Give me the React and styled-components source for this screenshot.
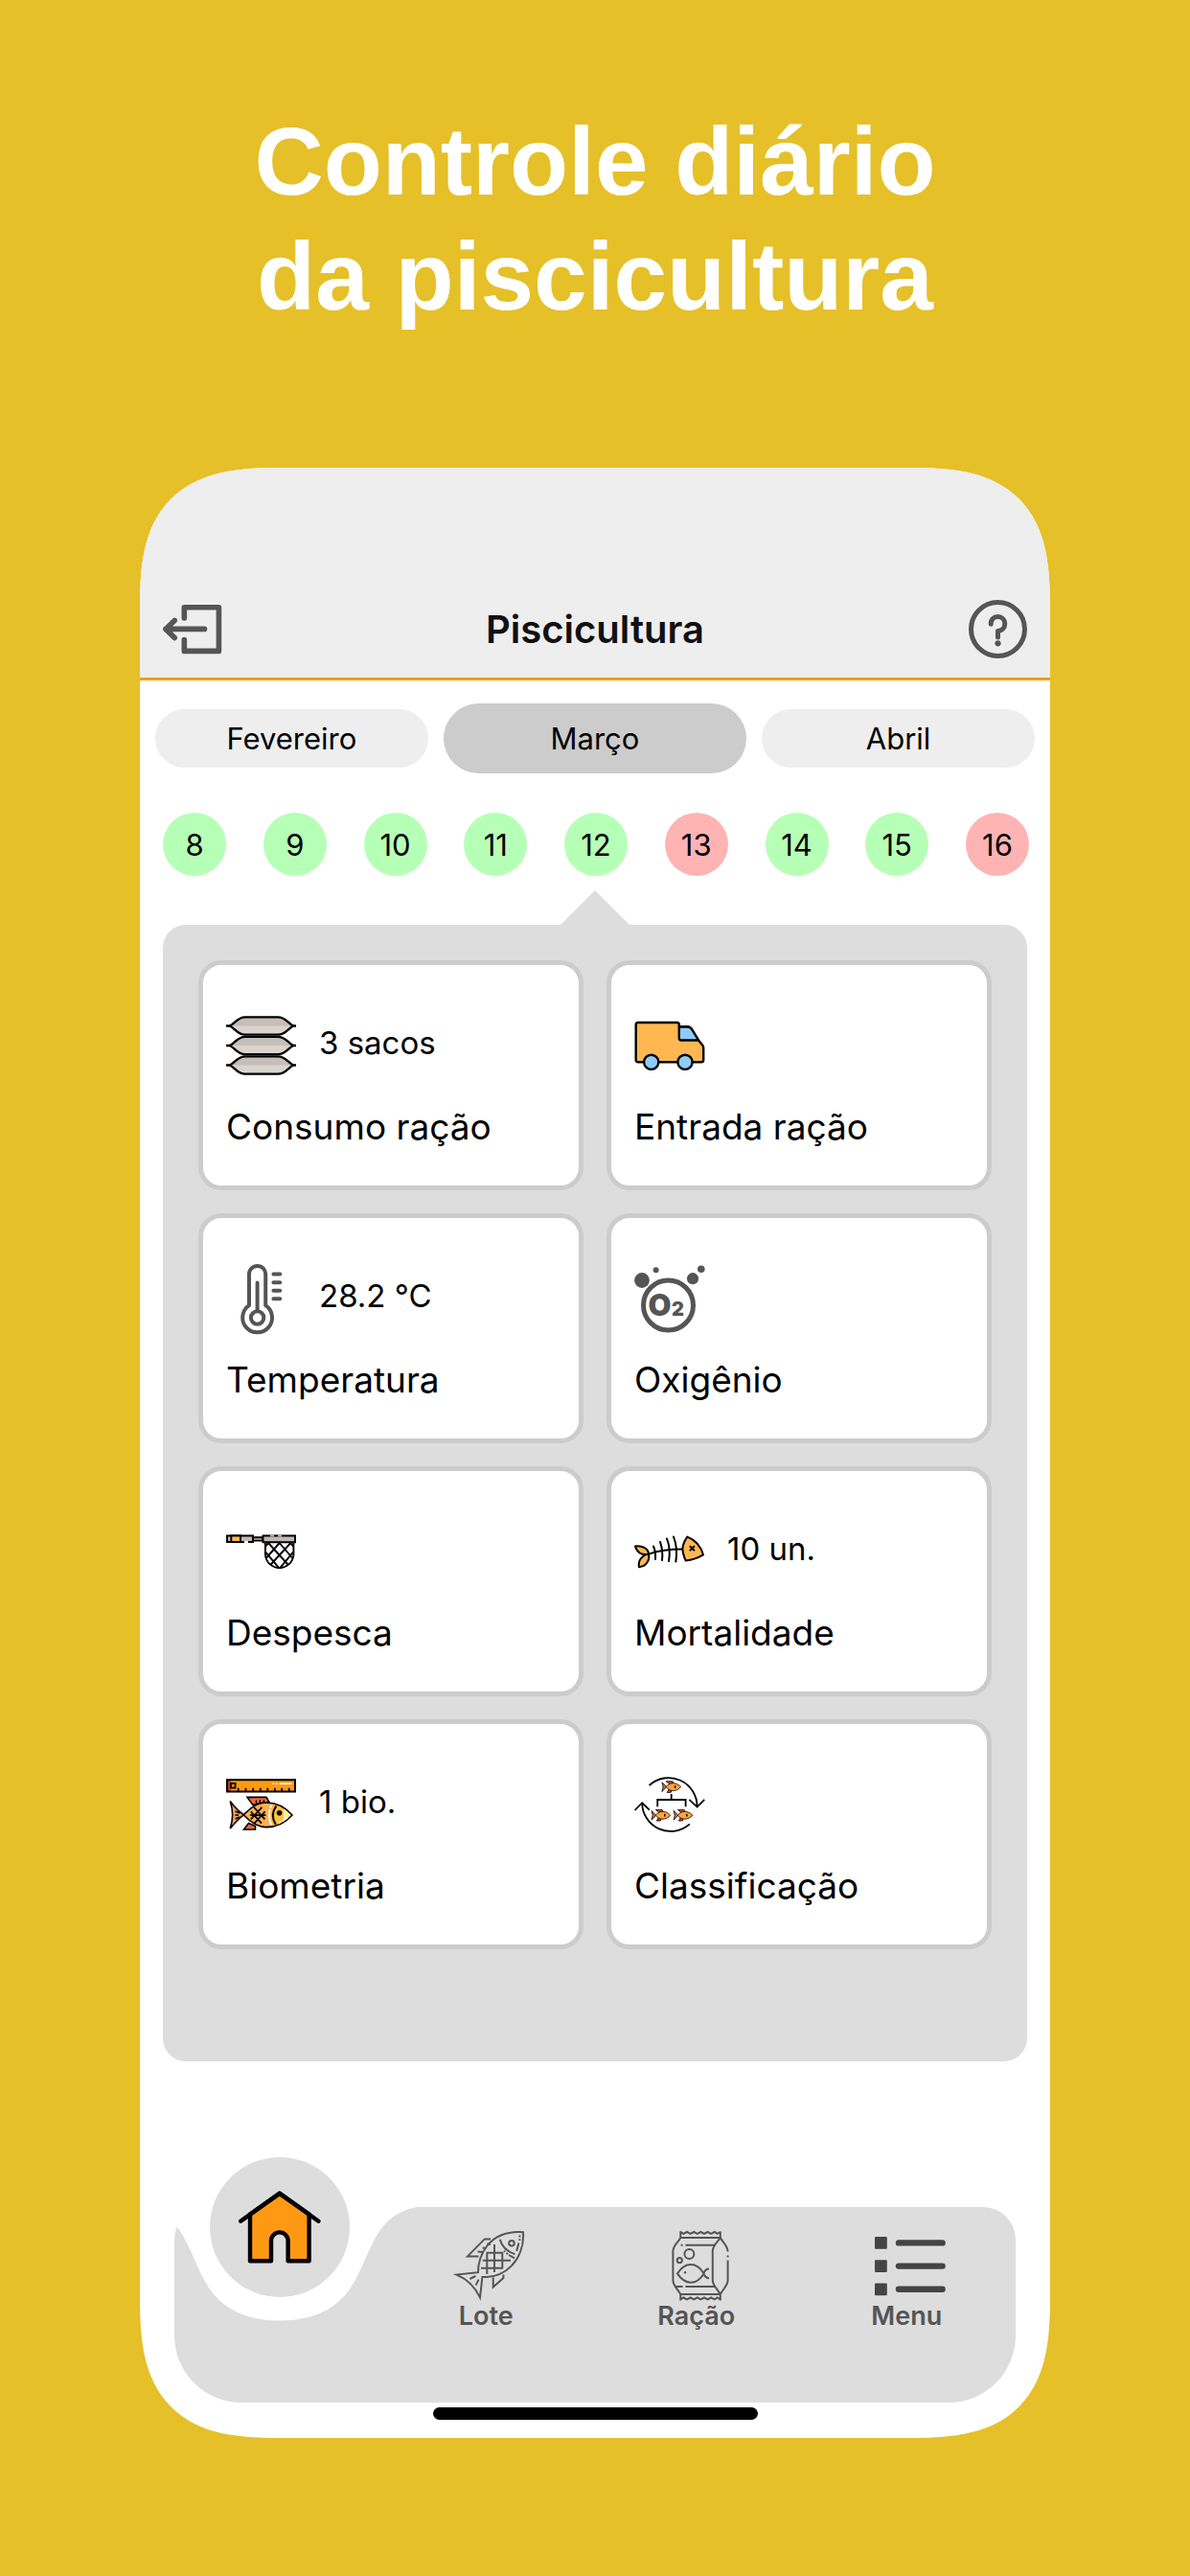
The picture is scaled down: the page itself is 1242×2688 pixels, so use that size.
import React, { useState } from "react";
import styled, { createGlobalStyle, css } from "styled-components";

const color = {
  page: "#e6c028",
  header: "#eeeeee",
  panel: "#dddddd",
  line: "#cccccc",
  ink: "#000000",
  icon: "#555555",
  accent: "#ff9914",
  ok: "#b6ffb6",
  missing: "#ffb3b3",
};

const GlobalStyle = createGlobalStyle`
  *, *::before, *::after { box-sizing: border-box; }
  body {
    margin: 0;
    background: ${color.page};
    color: ${color.ink};
    font-family: Inter, "Liberation Sans", sans-serif;
  }
  svg { display: block; overflow: visible; flex: none; }
`;

const Page = styled.div`
  display: flex;
  flex-direction: column;
  gap: 140px;
  padding: 108px 146px 144px;
`;

const Headline = styled.h1`
  margin: 0;
  color: #fff;
  text-align: center;
  font: 700 100px/120px "Liberation Sans", Arial, sans-serif;
`;

const Phone = styled.main`
  display: flex;
  flex-direction: column;
  overflow: hidden;
  background: #fff;
  border-radius: 120px;
  @supports (corner-shape: superellipse(1.5)) {
    border-radius: 150px;
    corner-shape: superellipse(1.5);
  }
`;

const plainButton = css`
  margin: 0;
  padding: 0;
  border: 0;
  background: none;
  color: inherit;
  font: inherit;
  cursor: pointer;
`;

const Header = styled.header`
  display: flex;
  align-items: center;
  justify-content: space-between;
  padding: 138px 24px 20px;
  background: ${color.header};
  border-bottom: 3px solid ${color.accent};
`;

const IconButton = styled.button`
  ${plainButton}
  color: ${color.icon};
`;

const Title = styled.h2`
  margin: 0;
  font-size: 40px;
  line-height: 48px;
  font-weight: 600;
  color: #111;
`;

const Months = styled.nav`
  display: flex;
  align-items: center;
  gap: 16px;
  padding: 24px 16px 0;
`;

const Month = styled.button`
  ${plainButton}
  flex: ${(p) => (p.$active ? 10 : 9)} 1 0;
  height: ${(p) => (p.$active ? 73 : 61)}px;
  border-radius: 37px;
  background: ${(p) => (p.$active ? color.line : color.header)};
  font-size: 31px;
`;

const Days = styled.div`
  display: flex;
  justify-content: space-between;
  padding: 41px 22px 15px 24px;
`;

const Day = styled.button`
  ${plainButton}
  width: 66px;
  height: 66px;
  border-radius: 50%;
  background: ${(p) => (p.$missing ? color.missing : color.ok)};
  font-size: 31px;
`;

const Pointer = styled.div`
  align-self: center;
  width: 72px;
  height: 36px;
  background: ${color.panel};
  clip-path: polygon(50% 0, 100% 100%, 0 100%);
`;

const Panel = styled.section`
  display: grid;
  grid-template-columns: 1fr 1fr;
  gap: 24px;
  margin: 0 24px;
  padding: 37px 37px 117px;
  background: ${color.panel};
  border-radius: 24px;
`;

const CardBox = styled.button`
  ${plainButton}
  display: flex;
  flex-direction: column;
  align-items: flex-start;
  gap: 24px;
  padding: 48px 24px 37px;
  background: #fff;
  border: 5px solid ${color.line};
  border-radius: 24px;
  text-align: left;
`;

const CardTop = styled.span`
  display: flex;
  gap: 24px;
`;

const CardValue = styled.span`
  font-size: 33px;
  line-height: 66px;
`;

const CardLabel = styled.span`
  font-size: 37px;
  line-height: 48px;
`;

const BottomArea = styled.footer`
  display: flex;
  flex-direction: column;
  align-items: center;
  gap: 5px;
  padding: 152px 36px 19px;
`;

const TabBar = styled.nav`
  position: relative;
  display: grid;
  grid-template-columns: repeat(4, 1fr);
  align-self: stretch;
  height: 204px;
  background: ${color.panel};
  border-radius: 34px 34px 70px 70px;
`;

const Notch = styled.svg`
  position: absolute;
  left: calc(12.5% - 143px);
  top: -1px;
`;

const HomeLink = styled.a`
  position: absolute;
  left: calc(12.5% - 73px);
  top: -52px;
  display: grid;
  place-items: center;
  width: 146px;
  height: 146px;
  border-radius: 50%;
  background: ${color.panel};
`;

const Tab = styled.a`
  grid-column: ${(p) => p.$column};
  display: flex;
  flex-direction: column;
  align-items: center;
  gap: 2px;
  padding-top: 25px;
  color: ${color.icon};
  text-decoration: none;
`;

const TabLabel = styled.span`
  padding-right: 8px;
  font-size: 27px;
  line-height: 30px;
  font-weight: 600;
`;

const HomeIndicator = styled.div`
  width: 339px;
  height: 13px;
  border-radius: 7px;
  background: #000;
`;

const CardSvg = ({ children }) => (
  <svg width="73" height="73" viewBox="0 0 73 73" fill="none" aria-hidden="true">
    {children}
  </svg>
);

const ExitIcon = () => (
  <svg width="61" height="51" viewBox="0 0 61 51" fill="none" stroke="currentColor" strokeWidth="5.6" strokeLinecap="round" strokeLinejoin="round" aria-hidden="true">
    <path d="M22.3 14V2.8H58.4V48.4H22.3V36.5" />
    <path d="M3 25.4H43.5M12.2 16.4L3 25.4L12.2 34.6" />
  </svg>
);

const HelpIcon = () => (
  <svg width="61" height="61" viewBox="0 0 61 61" fill="none" stroke="currentColor" strokeWidth="5" strokeLinecap="round" strokeLinejoin="round" aria-hidden="true">
    <circle cx="30.5" cy="30.5" r="28" />
    <path d="M23.2 25.2C23 20.6 26 17.6 30.4 17.6C34.8 17.6 37.8 20.8 37.8 24.8C37.8 29 35 32 30.5 32.6V39" />
    <circle cx="30.5" cy="45.3" r="3.1" fill="currentColor" stroke="none" />
  </svg>
);

const sackPath = (c) =>
  `M4 ${c}C9 ${c - 2.6} 12 ${c - 9.2} 20 ${c - 9.2}H54C62 ${c - 9.2} 65 ${c - 2.6} 70 ${c}C65 ${c + 2.6} 62 ${c + 9.2} 54 ${c + 9.2}H20C12 ${c + 9.2} 9 ${c + 2.6} 4 ${c}Z`;

const SacksIcon = () => (
  <CardSvg>
    {[15.5, 36, 56.5].map((c) => (
      <g key={c}>
        <path d={sackPath(c)} fill="#dbd4ce" />
        <path d={`M4 ${c}C9 ${c - 2.6} 12 ${c - 9.2} 20 ${c - 9.2}H54C62 ${c - 9.2} 65 ${c - 2.6} 70 ${c}Z`} fill="#c6beb8" />
        <path d={sackPath(c)} stroke="#000" strokeWidth="2.3" strokeLinejoin="round" />
        <path d={`M0 ${c}H5M69 ${c}H73`} stroke="#000" strokeWidth="2.4" />
      </g>
    ))}
  </CardSvg>
);

const TruckIcon = () => (
  <CardSvg>
    <g stroke="#000" strokeWidth="2.4" strokeLinejoin="round">
      <path d="M4 12H44.5Q46.8 12 46.8 14.3V16.5H55.5Q58.5 16.5 60.3 19.5L67 30.5L71 35.2Q72.2 36.6 72.2 38.5V51Q72.2 53.3 70 53.3H4Q1.7 53.3 1.7 51V14.3Q1.7 12 4 12Z" fill="#ffb751" />
      <path d="M46.8 16.5H55.5Q58.5 16.5 60.3 19.5L67 30.5H49Q46.8 30.5 46.8 28.3Z" fill="#8fcbfa" />
      <circle cx="17.7" cy="53.3" r="7.6" fill="#8fcbfa" />
      <circle cx="53" cy="53.3" r="7.6" fill="#8fcbfa" />
    </g>
  </CardSvg>
);

const ThermometerIcon = () => (
  <CardSvg>
    <g stroke={color.icon} strokeWidth="4" strokeLinecap="round">
      <path d="M24 43.2V10.5a8.6 8.6 0 0 1 17.2 0V43.2A15.4 15.4 0 1 1 24 43.2Z" strokeLinejoin="round" />
      <circle cx="32.6" cy="56" r="6.7" />
      <path d="M32.6 19.5V48M49.4 10.6H56.2M49.4 19.2H56.2M49.4 27.7H56.2M49.4 36.3H56.2" />
    </g>
  </CardSvg>
);

const OxygenIcon = () => (
  <CardSvg>
    <g fill={color.icon}>
      <circle cx="35.5" cy="43" r="26" fill="none" stroke={color.icon} strokeWidth="5" />
      <circle cx="8" cy="17" r="7.9" />
      <circle cx="22.6" cy="6.3" r="3" />
      <circle cx="61" cy="15.2" r="6.1" />
      <circle cx="69.8" cy="5.2" r="3.8" />
      <text x="14.5" y="53.5" fontFamily="Inter, sans-serif" fontWeight="900" fontSize="31">O</text>
      <text x="39" y="53.5" fontFamily="Inter, sans-serif" fontWeight="900" fontSize="20">2</text>
    </g>
  </CardSvg>
);

const NetIcon = () => (
  <CardSvg>
    <g stroke="#000" strokeWidth="1.9">
      <path d="M1 19.5H28V26H1Z" fill="#c0b8b3" />
      <path d="M5.3 19.5H15V26H5.3Z" fill="#ffb751" />
      <path d="M28 21.2H38V24.6H28Z" fill="#c0b8b3" />
      <path d="M38.5 19.5H72V26.2H38.5Z" fill="#c0b8b3" />
      <path d="M40.9 27V39.5A14.8 14.8 0 0 0 70.4 39.5V27" />
      <path d="M44 27L64.5 49.5M55.6 27L69.4 43M67 27L70.2 30.6M41 36.4L55.6 53.6M67.4 27L46.6 49.5M55.8 27L41.6 43M44.2 27L41 30.6M70.2 36.4L55.8 53.6" />
    </g>
    <path d="M46 19.5H50M54 19.5H58" stroke="#c0b8b3" strokeWidth="2.1" />
    <path d="M19 26H23" stroke="#fff" strokeWidth="2.1" />
  </CardSvg>
);

const FishboneIcon = () => (
  <CardSvg>
    <g stroke="#000" strokeWidth="2" strokeLinecap="round" strokeLinejoin="round">
      <path d="M15 38.6C26 35 38 33.6 50 33.6" />
      <path d="M20 30.5C22 35 22.4 39 22 44M27 26C29.4 33 29.8 39 29 45M34 22.5C37 30 37.4 38 36 46M41 20.5C44.2 29 44.8 38 43.3 46.5" />
      <path d="M55.3 20.6C64 24 69.5 30.5 72 39.4C66 43 60 44.8 53.6 45.6C52.6 42 50.4 39 50.4 33.6C50.4 28 53 24 55.3 20.6Z" fill="#ffb751" />
      <path d="M58.4 30.8L62.4 34.6M62.4 30.8L58.4 34.6" />
      <path d="M15 38.4C14.5 32.6 8 29.6 1 30.4C2.6 36.6 8 40.6 15 38.4Z" fill="#ffb751" />
      <path d="M15 38.4C16.6 45.6 12 51.6 5 52.2C3.6 45.6 7.6 40.2 15 38.4Z" fill="#ffb751" />
    </g>
  </CardSvg>
);

const BiometryIcon = () => (
  <CardSvg>
    <path d="M1 10.3H72V22.6H1Z" fill="#ff9912" />
    <path d="M1 10.3H5V22.6H1Z" fill="#b5431c" />
    <path d="M1 10.3H72V22.6H1Z" stroke="#000" strokeWidth="2" />
    <path d="M5 13.8H9.6V18.6H5Z" fill="#e8890f" stroke="#000" strokeWidth="1.7" />
    <path d="M12.7 18.8V22M20.5 18.8V22M28.2 18.8V22M35.8 18.8V22M43.3 18.8V22M50.8 18.8V22M58.2 18.8V22M65.7 18.8V22" stroke="#000" strokeWidth="1.7" />
    <path d="M48.4 14.3H50M51.7 14.3H53.4M55.6 14.3H68.6" stroke="#fff" strokeWidth="1.6" />
    <g stroke="#000" strokeWidth="1.6" strokeLinejoin="miter">
      <path d="M22 28.4H42L45.5 34.5C39 33.4 33 34.4 28 36.5Z" fill="#ee6a42" />
      <path d="M18.5 62H30.5V58.6L23.5 55.4Z" fill="#ee6a42" />
      <path d="M4.2 32.6C9 39 13 43 18.4 46.8C13 50.6 8.6 55.6 4.2 61C7.6 51 7.6 42.5 4.2 32.6Z" fill="#f79b5e" />
    </g>
    <path d="M69 47C61 38 51.6 34 42 34C32 34 25 40 18.2 46.8C25 54 32 59.6 42 59.6C52.6 59.6 61.6 55.4 69 47Z" fill="#fdb050" />
    <path d="M69 47C63 40.4 57.8 37 52.4 35.6C48 43 48 51.4 52.4 58.4C58.6 56.4 63.6 53 69 47Z" fill="#ffc23c" />
    <path d="M69 47C66 43.6 63 41.2 60.4 39.6C59.4 44 59.4 50 60.8 54.6C64 52.4 66.8 49.8 69 47Z" fill="#fff09a" />
    <path d="M69 47C61 38 51.6 34 42 34C32 34 25 40 18.2 46.8C25 54 32 59.6 42 59.6C52.6 59.6 61.6 55.4 69 47Z" stroke="#000" strokeWidth="1.6" />
    <path d="M47.2 36.6C44.4 43 44.4 51 47.2 57.4" stroke="#fff" strokeWidth="1.9" strokeDasharray="3 1.4 20" />
    <path d="M52.4 37.4C48 43.6 48 50.8 51.8 56.8" stroke="#000" strokeWidth="2" />
    <path d="M55 55C58.6 53.8 62 51.6 64.6 48.6" stroke="#fff" strokeWidth="1.6" strokeDasharray="2.6 1.4" />
    <circle cx="55.6" cy="44.7" r="2.8" fill="#000" />
    <path d="M29 38.8L40.4 51.4M25.8 43.4L37 55.6M37.4 38.8L25.8 51.4M40.6 43.4L29.4 55.6M25 47.2H41.4M9.6 43L14.4 45M9.6 51L14.4 49M9.4 47H13" stroke="#000" strokeWidth="1.7" />
    <path d="M31.4 31.6V34.6M35.4 31V34.2M39.4 31V33.8" stroke="#000" strokeWidth="1.3" />
  </CardSvg>
);

const MiniFish = ({ x, y }) => (
  <g transform={`translate(${x} ${y})`} stroke="#000" strokeWidth="0.8">
    <path d="M4.6 .6H11.4L12.6 3.4H8Z" fill="#c9462c" />
    <path d="M5.6 12.2H9.6L10.6 9.4L7.6 8.8Z" fill="#c9462c" />
    <path d="M.4 1.6L5 6.4L.4 11.4L1.4 6.4Z" fill="#dd6440" />
    <path d="M20 6.4C17 3.2 14.2 2.5 11.6 2.5C8.6 2.5 6 4.6 4.4 6.4C6 8.4 8.6 10.4 11.6 10.4C14.6 10.4 17.4 9.4 20 6.4Z" fill="#ffa53a" />
    <path d="M14 5V7.6" strokeWidth="1.4" />
  </g>
);

const SortingIcon = () => (
  <CardSvg>
    <g stroke="#000" strokeWidth="1.8">
      <path d="M15.6 16A29.8 29.8 0 0 1 65.6 38.4M57.4 30.8L65.6 38.6L73.2 30.8" />
      <path d="M57.8 56.4A29.8 29.8 0 0 1 8.2 34.4M.6 41.8L8.2 34.2L15.8 41.6" />
      <path d="M38.7 25V31M24.2 38.2V31H53.6V38.2" />
    </g>
    <MiniFish x={28.6} y={11.2} />
    <MiniFish x={17.7} y={40.8} />
    <MiniFish x={40.8} y={40.8} />
  </CardSvg>
);

const HouseIcon = () => (
  <svg width="86" height="76" viewBox="0 0 86 76" fill="none" stroke="#000" strokeWidth="4.4" strokeLinejoin="round" strokeLinecap="round" aria-hidden="true">
    <path d="M12 24.5L42.8 3L73.6 24.5V73.3H51.6V52.2A8.8 8.8 0 0 0 34 52.2V73.3H12Z" fill={color.accent} />
    <path d="M2.2 31.7L42.8 2.6L83.4 31.7" />
  </svg>
);

const TabSvg = ({ children, width = 2 }) => (
  <svg width="72" height="72" viewBox="0 0 72 72" fill="none" stroke="currentColor" strokeWidth={width} aria-hidden="true">
    {children}
  </svg>
);

const BatchIcon = () => (
  <TabSvg>
    <path d="M71 1.2C52 0 40 7 33 16C26.4 24.6 24 33.6 24 43.2L1.6 45.6C12 50 21 58.6 26 69.4L28.4 48C40 48.6 50.6 44.6 58.6 36.6C67 28 72 15 71 1.2Z" />
    <path d="M37 8.4H30.8L13 26.4H24.6M33.4 13.2L37 14M28.6 17.4L32.4 18M23.6 21.4L29 22" />
    <path d="M39.7 48.6V58.6L50.4 49V45.4" />
    <path d="M46.8 8.8C48.4 15.8 54 21.2 62.4 24.4" />
    <path d="M33.3 22.7V45M41 14V43M49.3 21.8V39.6M32.6 22.7H50M28.8 30.7H58M27 38.7H49.6" />
    <circle cx="59" cy="12.7" r="2.8" />
    <path d="M15.4 50L21.4 47M21.6 56.6L24.6 50.6M66.4 12.6L64.2 21M56 25L62 28.4" />
    <path d="M67.4 4.6V10.6M51 20.6L55 24.4" strokeDasharray="1.8 1.8" />
  </TabSvg>
);

const zigzag = (y, d) => `M14.8 ${y}l3.6 ${d}l3.6 ${-d}l3.6 ${d}l3.6 ${-d}l3.6 ${d}l3.6 ${-d}l3.6 ${d}l3.6 ${-d}l3.6 ${d}l3.6 ${-d}l3 ${d}l3 ${-d}`;

const FeedIcon = () => (
  <TabSvg>
    <path d={zigzag(1, 1.9)} />
    <path d={zigzag(71.4, -1.9)} />
    <path d="M15.3 .4V7H56.8V.4M15.3 72.4V66H56.8V72.4" />
    <path d="M15.3 7C13 11.6 7.4 15 7.4 21V51.4C7.4 56.6 12.6 61 15.3 66" />
    <path d="M56.8 7C59 11.6 64.6 15 64.6 21.6M64.6 25.4V27.4M64.6 30.4V51.4C64.6 56.6 59.4 61 56.8 66" />
    <path d="M56.8 7C54 11.6 48.8 15 48.8 21V51.4C48.8 56.6 54 61 56.8 66" />
    <path d="M15.6 14.7H17.6M20.4 14.7H51M10 58H17.6M20.4 58H52" />
    <circle cx="24.4" cy="24" r="5" />
    <circle cx="14.3" cy="30.6" r="2.6" />
    <path d="M12 44.4C20 32 32 32 39.6 44.4C32 56.8 20 56.8 12 44.4ZM45 39.6C42 39.6 40.4 41.6 39.4 44.4C40.4 47.4 42 49.2 45 49.2" />
    <circle cx="20" cy="43.3" r="1.2" fill="currentColor" stroke="none" />
  </TabSvg>
);

const MenuIcon = () => (
  <TabSvg width={6.4}>
    <g color="#444444" stroke="#444444">
      {[12.4, 36.6, 60.8].map((y) => (
        <g key={y}>
          <rect x="-1" y={y - 6.4} width="12.8" height="12.8" rx="1" fill="currentColor" stroke="none" />
          <path d={`M24 ${y}H69.6`} strokeLinecap="round" />
        </g>
      ))}
    </g>
  </TabSvg>
);

const MONTHS = ["Fevereiro", "Março", "Abril"];

const DAYS = [
  { day: 8 },
  { day: 9 },
  { day: 10 },
  { day: 11 },
  { day: 12 },
  { day: 13, missing: true },
  { day: 14 },
  { day: 15 },
  { day: 16, missing: true },
];

const CARDS = [
  { label: "Consumo ração", value: "3 sacos", Icon: SacksIcon },
  { label: "Entrada ração", Icon: TruckIcon },
  { label: "Temperatura", value: "28.2 °C", Icon: ThermometerIcon },
  { label: "Oxigênio", Icon: OxygenIcon },
  { label: "Despesca", Icon: NetIcon },
  { label: "Mortalidade", value: "10 un.", Icon: FishboneIcon },
  { label: "Biometria", value: "1 bio.", Icon: BiometryIcon },
  { label: "Classificação", Icon: SortingIcon },
];

const TABS = [
  { label: "Lote", Icon: BatchIcon },
  { label: "Ração", Icon: FeedIcon },
  { label: "Menu", Icon: MenuIcon },
];

export default function App() {
  const [month, setMonth] = useState("Março");

  return (
    <>
      <GlobalStyle />
      <Page>
        <Headline>
          Controle diário
          <br />
          da piscicultura
        </Headline>
        <Phone>
          <Header>
            <IconButton type="button" aria-label="Sair">
              <ExitIcon />
            </IconButton>
            <Title>Piscicultura</Title>
            <IconButton type="button" aria-label="Ajuda">
              <HelpIcon />
            </IconButton>
          </Header>
          <Months>
            {MONTHS.map((name) => (
              <Month key={name} type="button" $active={name === month} onClick={() => setMonth(name)}>
                {name}
              </Month>
            ))}
          </Months>
          <Days>
            {DAYS.map(({ day, missing }) => (
              <Day key={day} type="button" $missing={missing}>
                {day}
              </Day>
            ))}
          </Days>
          <Pointer />
          <Panel>
            {CARDS.map(({ label, value, Icon }) => (
              <CardBox key={label} type="button">
                <CardTop>
                  <Icon />
                  {value && <CardValue>{value}</CardValue>}
                </CardTop>
                <CardLabel>{label}</CardLabel>
              </CardBox>
            ))}
          </Panel>
          <BottomArea>
            <TabBar>
              <Notch width="286" height="120" viewBox="0 -1 286 120" aria-hidden="true">
                <path
                  d="M286 -1V0C266 4 253 14 244 30C237 42 231 58 224 72C218 84 212 92 204 99C188 113 167 118.5 143 118.5C119 118.5 98 113 82 99C74 92 68 84 62 72C55 58 49 42 42 30C33 14 20 4 0 0V-1Z"
                  fill="#fff"
                />
              </Notch>
              <HomeLink href="#inicio" aria-label="Início">
                <HouseIcon />
              </HomeLink>
              {TABS.map(({ label, Icon }, index) => (
                <Tab key={label} href={`#${label.toLowerCase()}`} $column={index + 2}>
                  <Icon />
                  <TabLabel>{label}</TabLabel>
                </Tab>
              ))}
            </TabBar>
            <HomeIndicator />
          </BottomArea>
        </Phone>
      </Page>
    </>
  );
}
